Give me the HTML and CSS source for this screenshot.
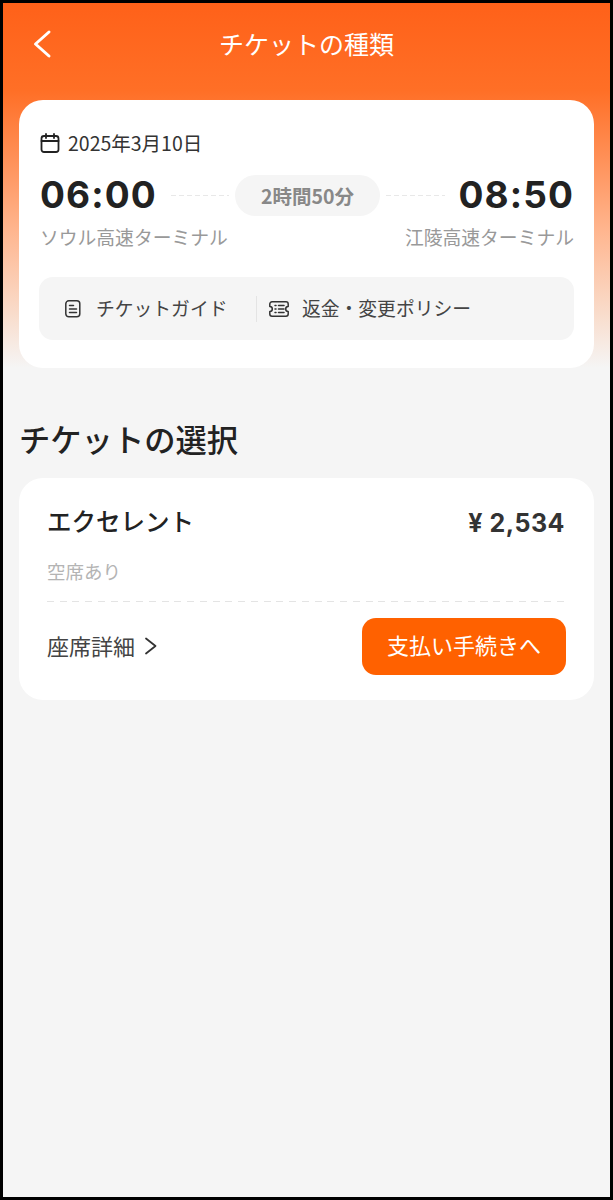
FILE: index.html
```html
<!DOCTYPE html>
<html lang="ja">
<head>
<meta charset="utf-8">
<title>チケットの種類</title>
<link rel="stylesheet" href="styles.css">
</head>
<body>
<div class="frame">
  <div class="hero"></div>
  <header class="header">
    <svg class="back" viewBox="0 0 20 30" width="20" height="30"><path d="M17 3 L3.500 15 L17 27"/></svg>
    <h1 class="title">チケットの種類</h1>
  </header>
  <section class="card trip">
    <div class="date">
      <svg class="ico-cal" viewBox="0 0 20 20" width="20" height="20"><rect x="1.500" y="3" width="17" height="16" rx="2.500"/><path d="M1.500 8H18.500M6 1V5M14 1V5"/></svg>
      <span>2025年3月10日</span>
    </div>
    <div class="times">
      <span class="time">06:00</span>
      <span class="dash"></span>
      <span class="dur">2時間50分</span>
      <span class="dash"></span>
      <span class="time">08:50</span>
    </div>
    <div class="stations"><span>ソウル高速ターミナル</span><span>江陵高速ターミナル</span></div>
    <div class="links">
      <div class="link guide">
        <svg class="ico" viewBox="0 0 18 20" width="18" height="20"><rect x="1.800" y="1.800" width="14" height="16" rx="3"/><path d="M5.500 6.500H9.500M5.500 10H12.500M5.500 13.500H12.500"/></svg>
        <span>チケットガイド</span>
      </div>
      <span class="sep"></span>
      <div class="link policy">
        <svg class="ico ico-w" viewBox="0 0 22 18" width="22" height="18"><path d="M4 1.800H18A2.200 2.200 0 0 1 20.200 4V6.500A2.500 2.500 0 0 0 20.200 11.500V14A2.200 2.200 0 0 1 18 16.200H4A2.200 2.200 0 0 1 1.800 14V11.500A2.500 2.500 0 0 0 1.800 6.500V4A2.200 2.200 0 0 1 4 1.800Z"/><path d="M7 5.500H8M7 9H8M7 12.500H8M10.500 5.500H16M10.500 9H16M10.500 12.500H16"/></svg>
        <span>返金・変更ポリシー</span>
      </div>
    </div>
  </section>
  <h2 class="section-title">チケットの選択</h2>
  <section class="card ticket">
    <div class="row">
      <span class="name">エクセレント</span>
      <span class="price">¥ 2,534</span>
    </div>
    <div class="avail">空席あり</div>
    <div class="rule"></div>
    <div class="row actions">
      <div class="detail">
        <span>座席詳細</span>
        <svg class="chev" viewBox="0 0 14 18" width="14" height="18"><path d="M2 1.500 L11.500 9 L2 16.500"/></svg>
      </div>
      <button class="pay" type="button">支払い手続きへ</button>
    </div>
  </section>
</div>
</body>
</html>
```
FILE: styles.css
```css
* { box-sizing: border-box; }
html, body { margin: 0; padding: 0; }
body {
  width: 613px;
  height: 1200px;
  background: #000;
  font-family: "Noto Sans CJK JP", "Noto Sans", sans-serif;
  color: #333;
  overflow: hidden;
}
.frame {
  position: relative;
  width: 613px;
  height: 1200px;
  border: 3px solid #000;
  background: #f5f5f5;
  overflow: hidden;
}
.hero {
  position: absolute;
  left: 0;
  right: 0;
  top: 0;
  height: 365px;
  background: linear-gradient(180deg, #ff6119 0%, #ff6f26 24%, #ff8f56 42%, #ffb58e 62%, #f9dccb 85%, #f5f5f5 100%);
}
.header {
  position: relative;
  height: 97px;
  padding-top: 20px;
  display: flex;
  justify-content: center;
}
.back {
  position: absolute;
  left: 29px;
  top: 26px;
  fill: none;
  stroke: #fff;
  stroke-width: 3;
  stroke-linecap: round;
  stroke-linejoin: round;
}
.title {
  margin: 0;
  font-size: 25px;
  line-height: 40px;
  font-weight: 400;
  color: #fff;
}
.card {
  position: relative;
  margin: 0 16px;
  background: #fff;
  border-radius: 24px;
}
.trip {
  height: 268px;
  padding: 30px 20px 0 20px;
}
.date {
  display: flex;
  align-items: center;
  gap: 8px;
  height: 26px;
  padding-left: 1px;
  font-size: 19.500px;
  line-height: 26px;
  color: #333;
}
.ico-cal {
  fill: none;
  stroke: #222;
  stroke-width: 1.800;
  stroke-linecap: round;
}
.times {
  display: flex;
  align-items: center;
  margin-top: 17px;
  height: 44px;
  padding-left: 1px;
}
.time {
  font-family: "Inter", "Liberation Sans", sans-serif;
  font-weight: 700;
  font-size: 37px;
  line-height: 44px;
  letter-spacing: 1.100px;
  color: #222;
}
.dash {
  flex: 1;
  height: 1px;
  margin: 0 6px 0 14px;
  background: repeating-linear-gradient(90deg, #e8e8e8 0 5px, transparent 5px 8px);
}
.dash:nth-of-type(4) {
  margin: 0 14px 0 6px;
}
.dur {
  width: 145px;
  height: 41px;
  border-radius: 21px;
  background: #f5f5f5;
  color: #888;
  font-weight: 700;
  font-size: 19.500px;
  line-height: 41px;
  text-align: center;
}
.stations {
  display: flex;
  justify-content: space-between;
  margin-top: 6px;
  padding-left: 1px;
  font-size: 18.800px;
  line-height: 28px;
  color: #999;
}
.links {
  display: flex;
  align-items: center;
  height: 63px;
  margin-top: 26px;
  background: #f5f5f5;
  border-radius: 14px;
  font-size: 18.800px;
  line-height: 28px;
  color: #444;
}
.link {
  display: flex;
  align-items: center;
}
.link span {
  padding-bottom: 2px;
}
.guide {
  width: 217px;
  padding-left: 25px;
  gap: 14px;
}
.policy {
  padding-left: 11px;
  gap: 12px;
}
.ico {
  fill: none;
  stroke: #333;
  stroke-width: 1.500;
  stroke-linecap: round;
  stroke-linejoin: round;
}
.sep {
  width: 1px;
  height: 26px;
  background: #e4e4e4;
}
.section-title {
  margin: 51px 0 0 16px;
  height: 59px;
  font-size: 31.300px;
  line-height: 40px;
  font-weight: 500;
  color: #222;
}
.ticket {
  height: 222px;
  padding: 24px 28px 0;
}
.row {
  display: flex;
  justify-content: space-between;
  align-items: center;
}
.name {
  font-size: 24.500px;
  line-height: 38px;
  font-weight: 500;
  color: #222;
}
.price {
  position: relative;
  top: 2px;
  margin-right: 1px;
  font-family: "Inter", "Liberation Sans", sans-serif;
  font-size: 25px;
  line-height: 38px;
  font-weight: 700;
  color: #333;
  letter-spacing: 0.500px;
}
.avail {
  margin-top: 17px;
  font-size: 18.500px;
  line-height: 28px;
  color: #b4b4b4;
}
.rule {
  height: 1px;
  margin-top: 16px;
  background: repeating-linear-gradient(90deg, #e4e4e4 0 7px, transparent 7px 12.750px);
}
.actions {
  margin-top: 16px;
}
.detail {
  display: flex;
  align-items: center;
  gap: 9px;
  padding-bottom: 4px;
  font-size: 22px;
  color: #444;
}
.chev {
  margin-top: 2px;
  fill: none;
  stroke: #333;
  stroke-width: 1.800;
  stroke-linecap: round;
  stroke-linejoin: round;
}
.pay {
  width: 204px;
  height: 57px;
  padding: 0 0 5px;
  border: 0;
  border-radius: 14px;
  background: #ff6100;
  color: #fff;
  font-family: inherit;
  font-size: 22px;
  font-weight: 400;
}
```
